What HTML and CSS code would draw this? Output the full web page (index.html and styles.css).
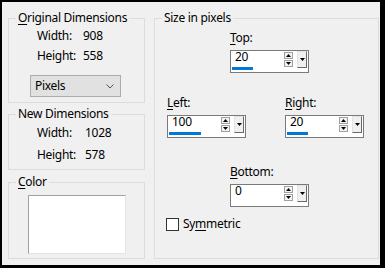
FILE: index.html
```html
<!doctype html>
<html lang="en">
<head>
  <meta charset="UTF-8"/>
  <title>Add Borders</title>
  <link rel="stylesheet" href="styles.css">
</head>
<body>
<div class="dialog">
  <div class="col-left">
    <fieldset class="group group-original">
      <legend><u>O</u>riginal Dimensions</legend>
      <div class="dims">
        <span>Width:</span><span>908</span>
        <span>Height:</span><span>558</span>
      </div>
      <div class="combo">
        <span>Pixels</span>
        <svg width="8" height="5" viewBox="0 0 8 5"><path d="M0.5 0.5 L4 4 L7.5 0.5" fill="none" stroke="#555" stroke-width="1"/></svg>
      </div>
    </fieldset>
    <fieldset class="group group-new">
      <legend>New Dimensions</legend>
      <div class="dims dims-new">
        <span>Width:</span><span>1028</span>
        <span>Height:</span><span>578</span>
      </div>
    </fieldset>
    <fieldset class="group group-color">
      <legend><u>C</u>olor</legend>
      <div class="swatch"></div>
    </fieldset>
  </div>

  <fieldset class="group group-size">
    <legend>Size in pixels</legend>

    <div class="field field-top">
      <label><u>T</u>op:</label>
      <div class="num">
        <div class="num-text"><span>20</span><i class="num-bar" style="width:21px"></i></div>
        <div class="num-spin">
          <span class="spin-btn"><svg width="5" height="3" viewBox="0 0 5 3"><path d="M2.5 0 L5 3 L0 3 Z"/></svg></span>
          <span class="spin-btn"><svg width="5" height="3" viewBox="0 0 5 3"><path d="M0 0 L5 0 L2.5 3 Z"/></svg></span>
        </div>
        <div class="num-drop"><svg width="5" height="3" viewBox="0 0 5 3"><path d="M0 0 L5 0 L2.5 3 Z"/></svg></div>
      </div>
    </div>

    <div class="side-row">
      <div class="field">
        <label><u>L</u>eft:</label>
        <div class="num">
          <div class="num-text"><span>100</span><i class="num-bar" style="width:32px"></i></div>
          <div class="num-spin">
            <span class="spin-btn"><svg width="5" height="3" viewBox="0 0 5 3"><path d="M2.5 0 L5 3 L0 3 Z"/></svg></span>
            <span class="spin-btn"><svg width="5" height="3" viewBox="0 0 5 3"><path d="M0 0 L5 0 L2.5 3 Z"/></svg></span>
          </div>
          <div class="num-drop"><svg width="5" height="3" viewBox="0 0 5 3"><path d="M0 0 L5 0 L2.5 3 Z"/></svg></div>
        </div>
      </div>
      <div class="field field-right">
        <label><u>R</u>ight:</label>
        <div class="num">
          <div class="num-text"><span>20</span><i class="num-bar" style="width:21px"></i></div>
          <div class="num-spin">
            <span class="spin-btn"><svg width="5" height="3" viewBox="0 0 5 3"><path d="M2.5 0 L5 3 L0 3 Z"/></svg></span>
            <span class="spin-btn"><svg width="5" height="3" viewBox="0 0 5 3"><path d="M0 0 L5 0 L2.5 3 Z"/></svg></span>
          </div>
          <div class="num-drop"><svg width="5" height="3" viewBox="0 0 5 3"><path d="M0 0 L5 0 L2.5 3 Z"/></svg></div>
        </div>
      </div>
    </div>

    <div class="field field-bottom">
      <label><u>B</u>ottom:</label>
      <div class="num">
        <div class="num-text"><span>0</span></div>
        <div class="num-spin">
          <span class="spin-btn"><svg width="5" height="3" viewBox="0 0 5 3"><path d="M2.5 0 L5 3 L0 3 Z"/></svg></span>
          <span class="spin-btn"><svg width="5" height="3" viewBox="0 0 5 3"><path d="M0 0 L5 0 L2.5 3 Z"/></svg></span>
        </div>
        <div class="num-drop"><svg width="5" height="3" viewBox="0 0 5 3"><path d="M0 0 L5 0 L2.5 3 Z"/></svg></div>
      </div>
    </div>

    <label class="check"><span class="check-box"></span><span>Sy<u>m</u>metric</span></label>
  </fieldset>
</div>
</body>
</html>
```

FILE: styles.css
```css
*, *:before {
  box-sizing: border-box;
}

body {
  margin: 0;
  background: #000;
  font: 12px/16px "Noto Sans", "Open Sans", sans-serif;
  letter-spacing: -0.3px;
  color: #000;
}

u {
  text-decoration-thickness: 1px;
  text-underline-offset: 2px;
}

.dialog {
  display: grid;
  grid-template-columns: 137px 225px;
  column-gap: 9px;
  height: 263px;
  margin: 2px 5px 3px 2px;
  padding: 8px 0 6px 6px;
  background: #f0f0f0;
}

.col-left {
  display: flex;
  flex-direction: column;
}

.group {
  margin: 0;
  padding: 0;
  min-width: 0;
  border: 1px solid #dcdcdc;
}

.group legend {
  margin-left: 7px;
  padding: 0 2px;
}

.group-original {
  height: 93px;
  padding-top: 2px;
}

.group-new {
  height: 64px;
  margin-top: 3px;
  padding-top: 3px;
}

.group-color {
  flex: 1;
  margin-top: 4px;
}

.dims {
  display: grid;
  grid-template-columns: 46px auto;
  row-gap: 4px;
  padding-left: 28px;
}

.dims-new {
  grid-template-columns: 48px auto;
  row-gap: 6px;
}

.combo {
  display: flex;
  align-items: center;
  justify-content: space-between;
  width: 91px;
  height: 22px;
  margin: 11px 0 0 21px;
  padding: 0 6px 0 4px;
  border: 1px solid #adadad;
  background: #e1e1e1;
}

.swatch {
  width: 98px;
  height: 59px;
  margin: 5px 0 0 19px;
  background: #fff;
  border: 1px solid;
  border-color: #a0a0a0 #e3e3e3 #e3e3e3 #a0a0a0;
}

.group-size {
  padding-top: 4px;
}

.field {
  display: flex;
  flex-direction: column;
  gap: 4px;
  width: 79px;
}

.field-top {
  margin-left: 75px;
}

.side-row {
  display: flex;
  margin-top: 22px;
  padding-left: 12px;
}

.field-right {
  margin-left: 39px;
}

.field-bottom {
  margin: 26px 0 0 75px;
}

.num {
  display: flex;
  align-items: flex-start;
  height: 23px;
  padding: 0 1px 0 1px;
  border: 1px solid #7a7a7a;
  background: #fff;
}

.num-text {
  flex: 1;
  display: flex;
  flex-direction: column;
  align-items: flex-start;
  line-height: 12px;
}

.num-text span {
  margin-left: 3px;
}

.num-bar {
  display: block;
  height: 3px;
  margin-top: 4px;
  background: #0078d7;
}

.num-spin {
  display: flex;
  flex-direction: column;
  gap: 1px;
  margin: 1px 4px 0 0;
}

.spin-btn {
  display: flex;
  align-items: center;
  justify-content: center;
  width: 9px;
  height: 7px;
  border: 1px solid #a0a0a0;
  background: #f4f4f4;
}

.num-drop {
  display: flex;
  align-items: center;
  justify-content: center;
  width: 10px;
  height: 17px;
  border: 1px solid;
  border-color: #e3e3e3 #696969 #696969 #e3e3e3;
  background: #f0f0f0;
}

.check {
  display: flex;
  align-items: center;
  gap: 4px;
  margin: 9px 0 0 11px;
}

.check-box {
  width: 13px;
  height: 13px;
  border: 1px solid #333;
  background: #fff;
}
```
